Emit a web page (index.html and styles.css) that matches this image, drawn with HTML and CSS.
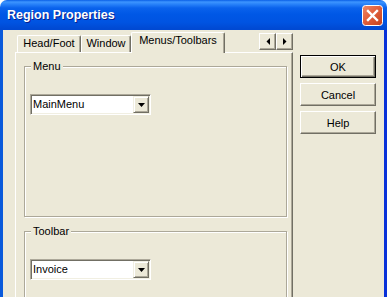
FILE: index.html
```html
<!DOCTYPE html>
<html lang="en">

<head>
    <meta charset="UTF-8">
    <meta name="viewport" content="width=device-width, initial-scale=1.0">
    <title>Region Properties</title>
    <link rel="stylesheet" href="styles.css">
</head>

<body>
    <div class="window">
        <div class="titlebar">
            <span class="title">Region Properties</span>
            <button class="close-btn" title="Close">
                <svg width="21" height="21" viewBox="0 0 21 21">
                    <defs>
                        <linearGradient id="closeFill" x1="0" y1="0" x2="1" y2="1">
                            <stop offset="0" stop-color="#EE8A6A" />
                            <stop offset="0.45" stop-color="#E2603D" />
                            <stop offset="1" stop-color="#C2401C" />
                        </linearGradient>
                    </defs>
                    <rect x="0.5" y="0.5" width="20" height="20" rx="3" fill="url(#closeFill)" stroke="#fff" />
                    <path d="M6 6 L15 15 M15 6 L6 15" stroke="#fff" stroke-width="2.4" stroke-linecap="square" />
                </svg>
            </button>
        </div>
        <div class="frame">
            <div class="main">
                <div class="tabstrip">
                    <div class="tab tab-headfoot">Head/Foot</div>
                    <div class="tab tab-window">Window</div>
                    <div class="tab tab-active">Menus/Toolbars</div>
                    <div class="scroll-arrows">
                        <span class="arrow-btn">
                            <svg width="4" height="7" viewBox="0 0 4 7"><path d="M4 0 L4 7 L0.5 3.5 Z" fill="#000" /></svg>
                        </span>
                        <span class="arrow-btn">
                            <svg width="4" height="7" viewBox="0 0 4 7"><path d="M0 0 L0 7 L3.5 3.5 Z" fill="#000" /></svg>
                        </span>
                    </div>
                </div>
                <div class="panel">
                    <div class="group group-menu">
                        <div class="group-title">Menu</div>
                        <div class="combo">
                            <span class="combo-text">MainMenu</span>
                            <span class="combo-btn">
                                <svg width="7" height="4" viewBox="0 0 7 4"><path d="M0 0 L7 0 L3.5 4 Z" fill="#000" /></svg>
                            </span>
                        </div>
                    </div>
                    <div class="group group-toolbar">
                        <div class="group-title">Toolbar</div>
                        <div class="combo">
                            <span class="combo-text">Invoice</span>
                            <span class="combo-btn">
                                <svg width="7" height="4" viewBox="0 0 7 4"><path d="M0 0 L7 0 L3.5 4 Z" fill="#000" /></svg>
                            </span>
                        </div>
                    </div>
                </div>
            </div>
            <div class="buttons">
                <button class="btn btn-default">OK</button>
                <button class="btn">Cancel</button>
                <button class="btn">Help</button>
            </div>
        </div>
    </div>
</body>

</html>
```

FILE: styles.css
```css
body {
    margin: 0;
    padding: 0;
    background-color: #fff;
    font-family: 'Liberation Sans', Arial, sans-serif;
    font-size: 11px;
    color: #000;
}

.window {
    width: 387px;
    height: 297px;
    overflow: hidden;
    display: flex;
    flex-direction: column;
    border-radius: 7px 7px 0 0;
}

/* title bar */

.titlebar {
    height: 30px;
    flex-shrink: 0;
    display: flex;
    align-items: center;
    padding: 0 4px 0 7px;
    background: linear-gradient(to bottom, #0A5FE6 0px, #3D95FF 2px, #2A84FA 4px, #0A62EC 8px, #0058E6 14px, #0054E2 22px, #0049D2 29px);
}

.title {
    flex: 1;
    color: #fff;
    font-weight: bold;
    font-size: 12.5px;
    text-shadow: 1px 1px 0 #0A1E8C;
}

.close-btn {
    width: 21px;
    height: 21px;
    padding: 0;
    border: 0;
    background: none;
    display: block;
}

.close-btn svg {
    display: block;
}

/* body of the dialog */

.frame {
    flex: 1;
    display: flex;
    background-color: #ECE9D8;
    border-left: 3px solid #0A5ADB;
    border-right: 3px solid #0831D9;
    padding: 2px 8px 0 12px;
}

.main {
    width: 278px;
    display: flex;
    flex-direction: column;
}

.tabstrip {
    height: 20px;
    display: flex;
    align-items: flex-end;
    padding-left: 2px;
}

.tab {
    height: 17px;
    box-sizing: border-box;
    padding-top: 1px;
    line-height: 13px;
    text-align: center;
    border-top: 1px solid #fff;
    border-left: 1px solid #fff;
    border-right: 1px solid #716F64;
    border-radius: 2px 2px 0 0;
    box-shadow: inset -1px 0 #ACA899;
}

.tab-headfoot {
    width: 64px;
}

.tab-window {
    width: 50px;
}

.tab-active {
    width: 94px;
    height: 21px;
    margin-bottom: -1px;
    padding-top: 1px;
    background-color: #ECE9D8;
    position: relative;
    z-index: 1;
}

.scroll-arrows {
    margin-left: auto;
    align-self: flex-start;
    margin-top: 1px;
    display: flex;
}

.arrow-btn {
    width: 17px;
    height: 17px;
    box-sizing: border-box;
    display: flex;
    justify-content: center;
    align-items: center;
    border: 1px solid;
    border-color: #fff #716F64 #716F64 #fff;
    box-shadow: inset -1px -1px #ACA899;
}

.arrow-btn svg {
    display: block;
}

/* tab page */

.panel {
    flex: 1;
    border-top: 1px solid #fff;
    border-left: 1px solid #fff;
    border-right: 1px solid #716F64;
    box-shadow: inset -1px 0 #ACA899;
    padding: 13px 0 0 8px;
}

.group {
    width: 263px;
    box-sizing: border-box;
    border: 1px solid #ACA899;
    box-shadow: 1px 1px 0 #fff, inset 1px 1px 0 #fff;
    display: flex;
    flex-direction: column;
    align-items: flex-start;
}

.group-menu {
    height: 151px;
    margin-bottom: 14px;
}

.group-toolbar {
    height: 120px;
}

.group-title {
    margin: -7px 0 0 6px;
    padding: 0 2px;
    line-height: 13px;
    background-color: #ECE9D8;
}

.combo {
    width: 121px;
    height: 21px;
    box-sizing: border-box;
    margin: 21px 0 0 5px;
    padding: 1px;
    display: flex;
    background-color: #fff;
    border: 1px solid;
    border-color: #ACA899 #fff #fff #ACA899;
    box-shadow: inset 1px 1px #716F64, inset -1px -1px #F1EFE2;
}

.combo-text {
    flex: 1;
    line-height: 17px;
    padding-left: 1px;
}

.combo-btn {
    width: 16px;
    height: 17px;
    box-sizing: border-box;
    display: flex;
    justify-content: center;
    align-items: center;
    background-color: #ECE9D8;
    border: 1px solid;
    border-color: #F1EFE2 #716F64 #716F64 #F1EFE2;
    box-shadow: inset 1px 1px #fff, inset -1px -1px #ACA899;
}

.combo-btn svg {
    display: block;
    margin-top: 1px;
}

/* command buttons */

.buttons {
    margin-left: 7px;
    padding-top: 23px;
    display: flex;
    flex-direction: column;
    gap: 5px;
}

.btn {
    width: 76px;
    height: 23px;
    padding: 0;
    font-family: 'Liberation Sans', Arial, sans-serif;
    font-size: 11px;
    color: #000;
    background-color: #ECE9D8;
    border: 1px solid;
    border-color: #fff #716F64 #716F64 #fff;
    box-shadow: inset -1px -1px #ACA899;
}

.btn-default {
    border-color: #000;
    box-shadow: inset 1px 1px #fff, inset -1px -1px #716F64, inset -2px -2px #ACA899;
}
```
